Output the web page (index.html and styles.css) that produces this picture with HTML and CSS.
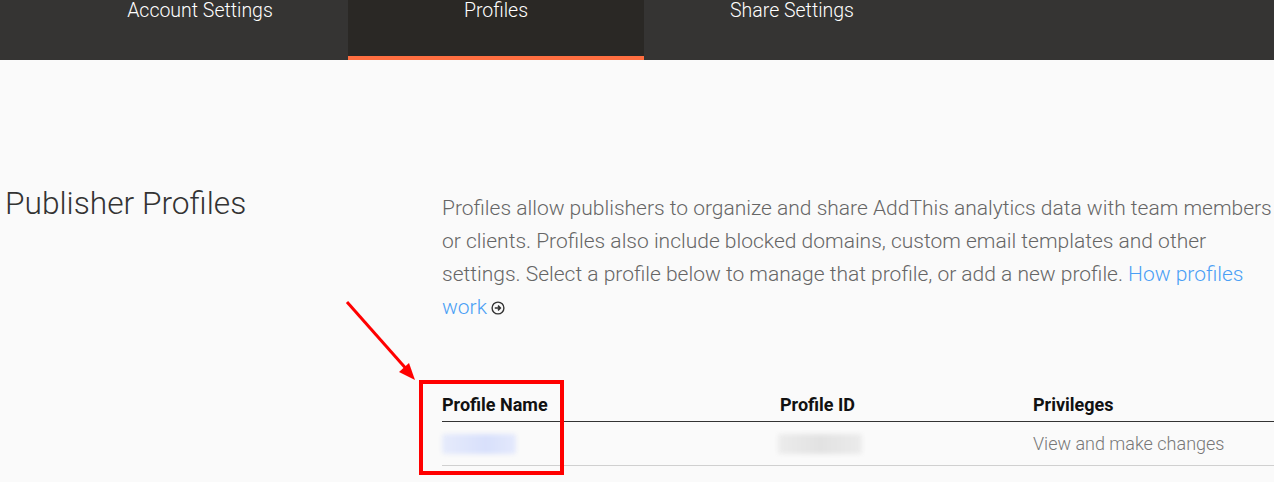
FILE: index.html
```html
<!DOCTYPE html>
<html lang="en">
<head>
<meta charset="utf-8">
<title>Profiles</title>
<link rel="stylesheet" href="styles.css">
</head>
<body>
<nav class="tabs">
  <a class="tab">Account Settings</a>
  <a class="tab active">Profiles</a>
  <a class="tab">Share Settings</a>
</nav>
<main class="content">
  <h1 class="title">Publisher Profiles</h1>
  <section class="details">
    <p class="intro">Profiles allow publishers to organize and share AddThis analytics data with team members or clients. Profiles also include blocked domains, custom email templates and other settings. Select a profile below to manage that profile, or add a new profile. <a class="link">How profiles work</a><span class="go"><svg width="14" height="14" viewBox="0 0 14 14"><circle cx="7" cy="7" r="5.9" fill="none" stroke="#333" stroke-width="1.4"/><path d="M3.8 7h5.6M7 4.6 9.4 7 7 9.4" fill="none" stroke="#333" stroke-width="1.5"/></svg></span></p>
    <div class="table">
      <div class="row head">
        <div class="cell">Profile Name</div>
        <div class="cell">Profile ID</div>
        <div class="cell">Privileges</div>
      </div>
      <div class="row body">
        <div class="cell"><span class="blur blue"></span></div>
        <div class="cell"><span class="blur grey"></span></div>
        <div class="cell muted">View and make changes</div>
      </div>
    </div>
  </section>
  <div class="mark-box"></div>
  <svg class="mark-arrow" width="80" height="90" viewBox="0 0 80 90">
    <line x1="2" y1="2" x2="64" y2="72" stroke="#f00" stroke-width="3"/>
    <polygon points="70,80 54,72 64,63" fill="#f00"/>
  </svg>
</main>
</body>
</html>
```
FILE: styles.css
```css
* { box-sizing: border-box; }
html, body { margin: 0; padding: 0; }
body {
  background: #fafafa;
  font-family: Roboto, "Noto Sans", "Liberation Sans", sans-serif;
  width: 1274px;
  height: 482px;
  overflow: hidden;
}
.tabs {
  display: flex;
  height: 60px;
  background: #353433;
  padding-left: 52px;
}
.tab {
  width: 296px;
  height: 60px;
  text-align: center;
  color: #fff;
  font-size: 19.5px;
  font-weight: 300;
  line-height: 22px;
}
.tab.active {
  background: #2a2825;
  border-bottom: 4px solid #ff6e40;
}
.content {
  position: relative;
  display: grid;
  grid-template-columns: 437px 1fr;
  padding-left: 5px;
}
.title {
  margin: 124px 0 0;
  font-size: 31.7px;
  font-weight: 300;
  line-height: 40px;
  color: #333;
}
.details { margin-top: 132px; }
.intro {
  margin: 0;
  font-size: 21px;
  font-weight: 300;
  line-height: 33px;
  color: #666;
}
.link { color: #4a9ff5; }
.go { display: inline-block; margin-left: 4px; vertical-align: -1px; }
.go svg { display: block; }
.table { margin-top: 64px; }
.row {
  display: grid;
  grid-template-columns: 338px 253px 1fr;
}
.head {
  height: 34px;
  border-bottom: 1px solid #333;
  font-size: 18px;
  font-weight: 700;
  color: #111;
  line-height: 34px;
}
.body {
  height: 44px;
  border-bottom: 1px solid #d0d0d0;
  align-items: center;
  font-size: 18px;
  font-weight: 300;
}
.muted { color: #777; }
.blur {
  display: block;
  height: 20px;
  border-radius: 3px;
  filter: blur(2px);
}
.blur.blue { width: 74px; background: linear-gradient(90deg, #e6ebfb, #d8e0fb 60%, #e4e9fc); }
.blur.grey { width: 84px; margin-left: -2px; background: linear-gradient(90deg, #ececec, #e2e2e2 50%, #ebebeb); }
.mark-box {
  position: absolute;
  left: 419px;
  top: 320px;
  width: 145px;
  height: 95px;
  border: 4px solid #f00;
}
.mark-arrow {
  position: absolute;
  left: 345px;
  top: 240px;
}
```
